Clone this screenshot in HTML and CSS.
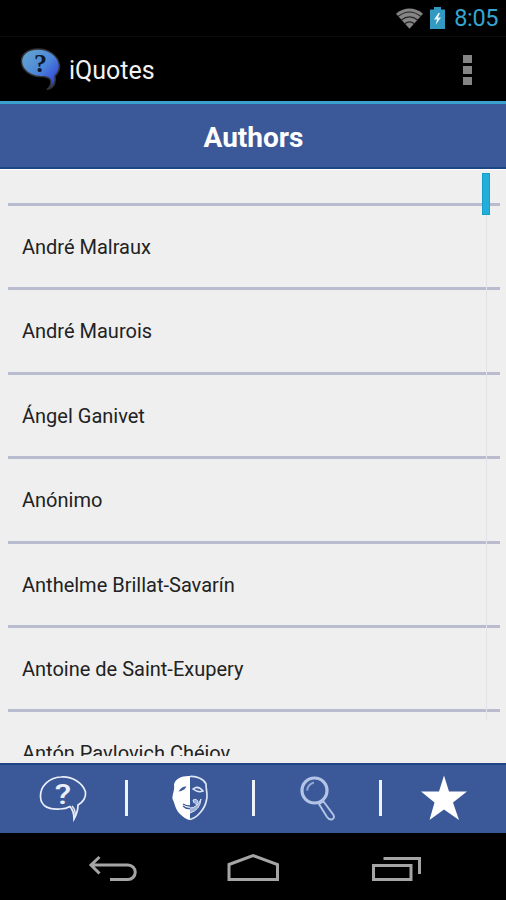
FILE: index.html
```html
<!DOCTYPE html>
<html lang="en">
<head>
  <meta charset="UTF-8">
  <meta name="viewport" content="width=device-width, initial-scale=1.0">
  <title>iQuotes</title>
  <link rel="stylesheet" href="styles.css">
</head>
<body>
  <div class="status-bar">
    <svg class="wifi" width="27" height="21" viewBox="0 0 28 21">
      <path d="M0 5.5 Q14 -5 28 5.5 L14 21 Z" fill="#858585"/>
      <path d="M2 8.5 Q14 -1 26 8.5 M5.500 12 Q14 5.500 22.500 12 M9 16 Q14 12 19 16" fill="none" stroke="#222" stroke-width="1.200"/>
    </svg>
    <svg class="battery" width="15" height="22" viewBox="0 0 15 22">
      <path d="M0 2.500H4V0H11V2.500H15V22H0Z" fill="#3299c0"/>
      <path d="M8.500 6 L4 12.500 H7 L5.500 18 L11 10.500 H8 L10 6Z" fill="#e8f6fb"/>
    </svg>
    <span class="clock">8:05</span>
  </div>

  <header class="action-bar">
    <svg class="logo" width="44" height="46" viewBox="0 0 44 46">
      <defs>
        <linearGradient id="bubble" x1="0" y1="0" x2="1" y2="1">
          <stop offset="0" stop-color="#66a9cf"/>
          <stop offset="0.500" stop-color="#4c86d8"/>
          <stop offset="0.800" stop-color="#354fd8"/>
          <stop offset="1" stop-color="#182558"/>
        </linearGradient>
      </defs>
      <path d="M19 2C8 2 2 8 2.500 15C3 23 11 29 21 29.500C27 29.500 30 30 31.500 33C33 37 31 40 28 42.500C34 41 37 36 36 29C39 26 41 23 40.500 18C39 8 29 2 19 2Z" fill="url(#bubble)" stroke="#333" stroke-width="1.500"/>
      <text x="21.500" y="25" class="logo-mark">?</text>
    </svg>
    <h1 class="app-name">iQuotes</h1>
    <div class="overflow"><i></i><i></i><i></i></div>
  </header>

  <h2 class="title">Authors</h2>

  <main class="list-area">
    <ul class="authors">
      <li></li>
      <li>André Malraux</li>
      <li>André Maurois</li>
      <li>Ángel Ganivet</li>
      <li>Anónimo</li>
      <li>Anthelme Brillat-Savarín</li>
      <li>Antoine de Saint-Exupery</li>
      <li>Antón Pavlovich Chéjov</li>
    </ul>
    <div class="scroll-track"></div>
    <div class="scroll-thumb"></div>
  </main>

  <nav class="tabs">
    <a class="tab">
      <svg width="50" height="48" viewBox="0 0 50 48" fill="none" stroke="#e9eefa" stroke-width="1.700">
        <path d="M23 2C11 2.500 2 11 2.500 22C3 32 12 35 22 34Q28 34 32 31.500Q36 36 36 44Q40 37 40 30C45 27 48 22 47.500 17C45 8 34 1 23 2Z"/>
        <path d="M34 31Q38 35 37 42" stroke-width="1.400"/>
        <text transform="translate(25 28.500) scale(1.250 1)" class="tab-mark">?</text>
      </svg>
    </a>
    <a class="tab">
      <svg width="40" height="48" viewBox="0 0 40 48">
        <path d="M20 1C12 .5 5 4 4 9.500C5 15 2 20 2.500 24C5 29 5 33 9 38C13 42 17 45 20 45Z" fill="#fff"/>
        <path d="M20 1.500C27 1 34 4 36 9C36 15 38 20 36.500 25C35 34 27 43 20 44.500" fill="none" stroke="#dce5f7" stroke-width="1.700"/>
        <path d="M8.500 16.500Q12 11 16.500 11.500Q14 16 8.500 16.500Z" fill="#3b5998"/>
        <path d="M23 14Q28 10 33 16Q28 18 23 14Z" fill="none" stroke="#dce5f7" stroke-width="1.500"/>
        <path d="M24 28L23 25Q27 23 28 27L26 30M20 33Q27 33 31 24Q30 35 20 38" fill="#9eb0d8" stroke="#dce5f7"/>
        <path d="M13 31Q16 34 20 33.500M13 29Q16 31 20 31" fill="none" stroke="#3b5998" stroke-width="1.400"/>
      </svg>
    </a>
    <a class="tab">
      <svg width="40" height="48" viewBox="0 0 40 48" fill="none">
        <circle cx="17.500" cy="15.500" r="12.500" stroke="#b4c4e6" stroke-width="3.200"/>
        <path d="M10 15.500Q11 9 17 7.500" stroke="#93a9d4" stroke-width="2"/>
        <path d="M22 29L26.500 26.500L36.500 40Q38 43 35 44.500Q32 45 30 42Z" stroke="#b4c4e6" stroke-width="1.900"/>
      </svg>
    </a>
    <a class="tab">
      <svg width="48" height="48" viewBox="0 0 48 48">
        <path d="M24 0.500L29 16.500H47L33 27.500L39 45L24 34.500L9.500 45L14.500 27.500L1 16.500H19Z" fill="#fff"/>
      </svg>
    </a>
  </nav>

  <footer class="nav-bar">
    <svg width="50" height="30" viewBox="0 0 50 30">
      <path d="M12.500 4L4 12L12.500 20.500M4 12H41A7 7 0 0 1 41 26.500H23" />
    </svg>
    <svg width="54" height="30" viewBox="0 0 54 30">
      <path d="M2 11.500L26 2.500L50.500 11.500V26.500H2Z"/>
    </svg>
    <svg width="50" height="30" viewBox="0 0 50 30">
      <path d="M2.500 12.500H40V26.500H2.500ZM12.500 5.500H48.500V21"/>
    </svg>
  </footer>
</body>
</html>
```

FILE: styles.css
```css
* {
  margin: 0;
  padding: 0;
  box-sizing: border-box;
}

body {
  font-family: Roboto, sans-serif;
  background-color: #000;
  height: 900px;
  display: grid;
  grid-template-columns: 100%;
  grid-template-rows: 37px 67px 65px 594px 70px 67px;
  overflow: hidden;
}

.status-bar {
  display: flex;
  align-items: center;
  justify-content: flex-end;
  padding-right: 8px;
  border-bottom: 1px solid #0b0b0b;
}

.battery {
  margin: 0 9px 0 7px;
}

.clock {
  color: #35a5d0;
  font-size: 23.5px;
  letter-spacing: -0.4px;
  line-height: 38px;
}

.action-bar {
  display: flex;
  align-items: center;
  padding: 0 34px 0 19px;
  border-bottom: 3px solid #3aa0cc;
}

.logo {
  margin-top: 2px;
}

.logo-mark {
  font: bold 26px "Liberation Serif", serif;
  fill: #10182c;
  text-anchor: middle;
}

.app-name {
  flex: 1;
  margin: 2px 0 0 6px;
  color: #f2f2f2;
  font-size: 25px;
  font-weight: 400;
}

.overflow {
  display: grid;
  gap: 3px;
  margin-top: 2px;
}

.overflow i {
  width: 9px;
  height: 8px;
  background-color: #858585;
}

.title {
  padding-left: 1px;
  background-color: #3b5998;
  border-bottom: 2px solid #1e4685;
  color: #fff;
  font-size: 28px;
  font-weight: 700;
  line-height: 67px;
  text-align: center;
}

.list-area {
  position: relative;
  padding: 8px 6px 8px 8px;
  background-color: #efefef;
  border-top: 1px solid #fff;
}

.authors {
  height: 578px;
  overflow: hidden;
  list-style: none;
}

.authors li {
  height: 84.4px;
  padding-left: 14px;
  border-bottom: 3px solid #b9bbce;
  color: #222;
  font-size: 20px;
  line-height: 83px;
}

.authors li:first-child {
  height: 28px;
}

.scroll-track {
  position: absolute;
  top: 4px;
  right: 19px;
  width: 1px;
  height: 547px;
  background-color: #e3e3e5;
}

.scroll-thumb {
  position: absolute;
  top: 3px;
  right: 16px;
  width: 8px;
  height: 42px;
  background-color: #22addb;
  border: 1px solid #149fc9;
}

.tabs {
  display: grid;
  grid-template-columns: 126px 127px 127px 128px;
  align-items: center;
  background-color: #3b5998;
  border-top: 2px solid #1e4685;
}

.tab {
  position: relative;
  display: flex;
  justify-content: center;
}

.tab + .tab::before {
  content: "";
  position: absolute;
  left: -1px;
  top: 5px;
  width: 3px;
  height: 36px;
  background-color: #eef2fb;
}

.tab-mark {
  font: 500 27px Roboto, sans-serif;
  fill: #e9eefa;
  stroke: none;
  text-anchor: middle;
}

.nav-bar {
  display: flex;
  align-items: center;
  justify-content: space-between;
  padding: 2px 85px 0 87px;
}

.nav-bar path {
  fill: none;
  stroke: #a5a5a5;
  stroke-width: 3;
}
```
